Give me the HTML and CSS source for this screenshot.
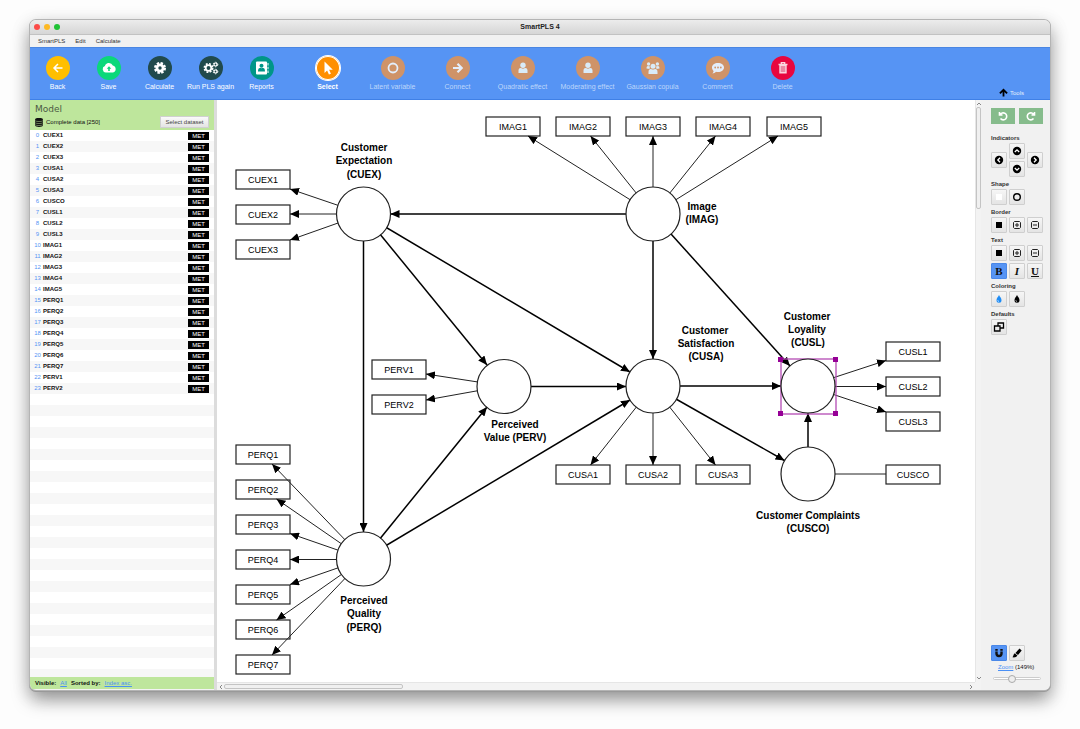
FILE: index.html
```html
<!DOCTYPE html>
<html lang="en">
<head>
<meta charset="utf-8">
<title>SmartPLS 4</title>
<link rel="stylesheet" href="styles.css">
</head>
<body>
<div class="window">
  <header class="titlebar">
    <div class="lights"><span class="light red"></span><span class="light yellow"></span><span class="light green"></span></div>
    <h1 class="title">SmartPLS 4</h1>
  </header>
  <nav class="menubar">
    <button class="menu">SmartPLS</button><button class="menu">Edit</button><button class="menu">Calculate</button>
  </nav>
  <div class="toolbar">
    <div class="actions">
      <button class="action"><span class="disc amber"><svg viewBox="0 0 24 24"><path d="M16.500 12H8.200M12 8l-4 4 4 4" fill="none" stroke="#fff" stroke-width="1.500"/></svg></span>Back</button>
      <button class="action"><span class="disc lime"><svg viewBox="0 0 24 24"><path d="M8.700 16.500a3.300 3.300 0 0 1-.8-6.400A4.200 4.200 0 0 1 15.800 9.500 3.600 3.600 0 0 1 16 16.500z" fill="#fff"/><path d="M12 10.200l-2.300 2.600h1.500V15h1.600v-2.200h1.500z" fill="#0bd87a"/></svg></span>Save</button>
      <button class="action"><span class="disc slate"><svg viewBox="0 0 24 24"><circle cx="12" cy="12" r="3.100" fill="none" stroke="#fff" stroke-width="2.800"/><circle cx="12" cy="12" r="4.900" fill="none" stroke="#fff" stroke-width="2.200" stroke-dasharray="2.400 1.448"/></svg></span>Calculate</button>
      <button class="action"><span class="disc slate"><svg viewBox="0 0 24 24"><circle cx="9.500" cy="12" r="2.800" fill="none" stroke="#fff" stroke-width="1.800"/><circle cx="9.500" cy="12" r="4.200" fill="none" stroke="#fff" stroke-width="1.600" stroke-dasharray="1.900 1.399"/><g fill="none" stroke="#fff"><circle cx="16.500" cy="8.500" r="1.500" stroke-width="1.200"/><circle cx="16.500" cy="8.500" r="2.300" stroke-width="1" stroke-dasharray="1.300 1.109"/><circle cx="16.500" cy="15.500" r="1.500" stroke-width="1.200"/><circle cx="16.500" cy="15.500" r="2.300" stroke-width="1" stroke-dasharray="1.300 1.109"/></g></svg></span>Run PLS again</button>
      <button class="action"><span class="disc teal"><svg viewBox="0 0 24 24"><rect x="6" y="5.500" width="11" height="13" rx="1" fill="#fff"/><path d="M17.500 7h1v2.500h-1zM17.500 10.800h1v2.500h-1zM17.500 14.600h1v2.500h-1z" fill="#fff"/><circle cx="11.500" cy="9.800" r="2" fill="#009688"/><path d="M8 15.500c0-4 1.500-4 3.500-3.200 2-.8 3.500-.8 3.500 3.200z" fill="#009688"/></svg></span>Reports</button>
    </div>
    <div class="modes">
      <button class="action current"><span class="disc orange"><svg viewBox="0 0 24 24"><path d="M8.500 5.500v11.500l2.600-2.400 1.800 4 2-.9-1.800-3.900h3.700z" fill="#fff"/></svg></span>Select</button>
      <button class="action dim"><span class="disc tan"><svg viewBox="0 0 24 24"><circle cx="12" cy="12" r="4.500" fill="none" stroke="#e3eefc" stroke-width="1.800"/></svg></span>Latent variable</button>
      <button class="action dim"><span class="disc tan"><svg viewBox="0 0 24 24"><path d="M7 12h8.500M11.500 7.800l4.200 4.200-4.200 4.200" fill="none" stroke="#e3eefc" stroke-width="2.200"/></svg></span>Connect</button>
      <button class="action dim"><span class="disc tan"><svg viewBox="0 0 24 24"><g id="person" fill="#d9ebf8"><circle cx="12" cy="9.300" r="2.700"/><path d="M7.500 17v-2.500c0-2.500 2-3 3-2.300 1 .6 2 .6 3 0 1-.7 3-.2 3 2.300V17z"/></g></svg></span>Quadratic effect</button>
      <button class="action dim"><span class="disc tan"><svg viewBox="0 0 24 24"><use href="#person"/></svg></span>Moderating effect</button>
      <button class="action dim"><span class="disc tan"><svg viewBox="0 0 24 24"><g fill="#d9ebf8"><circle cx="7.600" cy="8" r="1.700"/><circle cx="16.400" cy="8" r="1.700"/><path d="M5.500 12.500c0-3 1.500-3 3.500-2l-.5 2.500zM18.500 12.500c0-3-1.500-3-3.500-2l.5 2.500z"/><circle cx="12" cy="10.200" r="2.500"/><path d="M7.500 18v-2c0-3 2-3.300 3-2.800 1 .5 2 .5 3 0 1-.5 3-.2 3 2.800v2z"/></g></svg></span>Gaussian copula</button>
      <button class="action dim"><span class="disc tan"><svg viewBox="0 0 24 24"><path d="M12 7c3.500 0 6 2 6 4.500S15.500 16 12 16c-.8 0-1.500 0-2-.2-1 1-2.200 1.700-3.600 1.800.8-.8 1.200-1.600 1.200-2.600C6.500 14 6 12.800 6 11.500 6 9 8.500 7 12 7z" fill="#e3eefc"/><g fill="#cf9368"><circle cx="9.200" cy="11.500" r=".9"/><circle cx="12" cy="11.500" r=".9"/><circle cx="14.800" cy="11.500" r=".9"/></g></svg></span>Comment</button>
      <button class="action dim"><span class="disc crimson"><svg viewBox="0 0 24 24"><path d="M7.500 8.500h9M10.300 8V6.700h3.400V8" fill="none" stroke="#fbd5de" stroke-width="1.300"/><path d="M9 9.200h6v7.600H9z" fill="#e98aa3" stroke="#fbd5de" stroke-width="1.400"/></svg></span>Delete</button>
    </div>
    <button class="tools-toggle"><svg class="up" viewBox="0 0 10 10"><path d="M5 9.500V2M1 6l4-4 4 4" fill="none" stroke="#000" stroke-width="2"/></svg>Tools</button>
  </div>

  <div class="main">
    <aside class="sidebar">
      <div class="model">
        <h2 class="model-title">Model</h2>
        <div class="dataset">
          <svg class="db" viewBox="0 0 8 9"><path d="M0 1.500C0-.4 8-.4 8 1.500v6c0 1.900-8 1.900-8 0z" fill="#111"/><path d="M0 2.800c2 1 6 1 8 0M0 4.800c2 1 6 1 8 0M0 6.800c2 1 6 1 8 0" fill="none" stroke="#bee69c" stroke-width=".5"/></svg>
          <span>Complete data [250]</span>
          <button class="select-data">Select dataset</button>
        </div>
      </div>
      <div class="list">
        <table class="indicators">
          <tr><td class="idx">0</td><td class="name">CUEX1</td><td class="kind"><span class="met">MET</span></td></tr>
          <tr><td class="idx">1</td><td class="name">CUEX2</td><td class="kind"><span class="met">MET</span></td></tr>
          <tr><td class="idx">2</td><td class="name">CUEX3</td><td class="kind"><span class="met">MET</span></td></tr>
          <tr><td class="idx">3</td><td class="name">CUSA1</td><td class="kind"><span class="met">MET</span></td></tr>
          <tr><td class="idx">4</td><td class="name">CUSA2</td><td class="kind"><span class="met">MET</span></td></tr>
          <tr><td class="idx">5</td><td class="name">CUSA3</td><td class="kind"><span class="met">MET</span></td></tr>
          <tr><td class="idx">6</td><td class="name">CUSCO</td><td class="kind"><span class="met">MET</span></td></tr>
          <tr><td class="idx">7</td><td class="name">CUSL1</td><td class="kind"><span class="met">MET</span></td></tr>
          <tr><td class="idx">8</td><td class="name">CUSL2</td><td class="kind"><span class="met">MET</span></td></tr>
          <tr><td class="idx">9</td><td class="name">CUSL3</td><td class="kind"><span class="met">MET</span></td></tr>
          <tr><td class="idx">10</td><td class="name">IMAG1</td><td class="kind"><span class="met">MET</span></td></tr>
          <tr><td class="idx">11</td><td class="name">IMAG2</td><td class="kind"><span class="met">MET</span></td></tr>
          <tr><td class="idx">12</td><td class="name">IMAG3</td><td class="kind"><span class="met">MET</span></td></tr>
          <tr><td class="idx">13</td><td class="name">IMAG4</td><td class="kind"><span class="met">MET</span></td></tr>
          <tr><td class="idx">14</td><td class="name">IMAG5</td><td class="kind"><span class="met">MET</span></td></tr>
          <tr><td class="idx">15</td><td class="name">PERQ1</td><td class="kind"><span class="met">MET</span></td></tr>
          <tr><td class="idx">16</td><td class="name">PERQ2</td><td class="kind"><span class="met">MET</span></td></tr>
          <tr><td class="idx">17</td><td class="name">PERQ3</td><td class="kind"><span class="met">MET</span></td></tr>
          <tr><td class="idx">18</td><td class="name">PERQ4</td><td class="kind"><span class="met">MET</span></td></tr>
          <tr><td class="idx">19</td><td class="name">PERQ5</td><td class="kind"><span class="met">MET</span></td></tr>
          <tr><td class="idx">20</td><td class="name">PERQ6</td><td class="kind"><span class="met">MET</span></td></tr>
          <tr><td class="idx">21</td><td class="name">PERQ7</td><td class="kind"><span class="met">MET</span></td></tr>
          <tr><td class="idx">22</td><td class="name">PERV1</td><td class="kind"><span class="met">MET</span></td></tr>
          <tr><td class="idx">23</td><td class="name">PERV2</td><td class="kind"><span class="met">MET</span></td></tr>
        </table>
      </div>
      <div class="filter"><b>Visible:</b><a href="#all">All</a><b>Sorted by:</b><a href="#sort">Index asc.</a></div>
    </aside>

    <main class="canvas">
      <div class="drawing">
        <svg class="diagram" width="758" height="582" viewBox="217 100 758 582" role="img" aria-label="Path model">
          <defs>
            <marker id="head" viewBox="0 0 9 8" refX="9" refY="4" markerWidth="9" markerHeight="8" markerUnits="userSpaceOnUse" orient="auto"><path d="M0 0l9 4-9 4z"/></marker>
          </defs>
          <g class="boxes">
            <rect x="236" y="170" width="54" height="19"/><rect x="236" y="205" width="54" height="19"/><rect x="236" y="240" width="54" height="19"/>
            <rect x="486" y="117" width="54" height="19"/><rect x="556" y="117" width="54" height="19"/><rect x="626" y="117" width="54" height="19"/><rect x="696" y="117" width="54" height="19"/><rect x="767" y="117" width="54" height="19"/>
            <rect x="372" y="360" width="54" height="19"/><rect x="372" y="395" width="54" height="19"/>
            <rect x="886" y="342" width="54" height="19"/><rect x="886" y="377" width="54" height="19"/><rect x="886" y="412" width="54" height="19"/><rect x="886" y="465" width="54" height="19"/>
            <rect x="556" y="465" width="54" height="19"/><rect x="626" y="465" width="54" height="19"/><rect x="696" y="465" width="54" height="19"/>
            <rect x="236" y="445" width="54" height="19"/><rect x="236" y="480" width="54" height="19"/><rect x="236" y="515" width="54" height="19"/><rect x="236" y="550" width="54" height="19"/><rect x="236" y="585" width="54" height="19"/><rect x="236" y="620" width="54" height="19"/><rect x="236" y="655" width="54" height="19"/>
          </g>
          <g class="thin" marker-end="url(#head)">
            <path d="M363.500 214L290 189"/><path d="M363.500 214H290"/><path d="M363.500 214L290 240"/>
            <path d="M653 214L528 136"/><path d="M653 214L590.500 136"/><path d="M653 214V136"/><path d="M653 214L715.500 136"/><path d="M653 214L778 136"/>
            <path d="M504 386L426 374"/><path d="M504 386L426 400"/>
            <path d="M808 386L886 360.500"/><path d="M808 386.500H886"/><path d="M808 386L886 412"/>
            <path d="M653 386L590.500 465"/><path d="M653 386V465"/><path d="M653 386L715.500 465"/>
            <path d="M363.500 559L272 464"/><path d="M363.500 559L276.500 499"/><path d="M363.500 559L290 533.500"/><path d="M363.500 559.500H290"/><path d="M363.500 559L290 584.500"/><path d="M363.500 559L276.500 620"/><path d="M363.500 559L272 655"/>
          </g>
          <path class="plain" d="M808 474H886"/>
          <g class="thick" marker-end="url(#head)">
            <path d="M653 214H390.500"/><path d="M653 214V359"/><path d="M653 214L790 366"/>
            <path d="M363.500 214L487 365"/><path d="M363.500 214L630 372"/><path d="M363.500 214V532"/>
            <path d="M363.500 559L487 407"/><path d="M363.500 559L630 400"/>
            <path d="M504 386.500H626"/><path d="M653 386H781"/><path d="M653 386L784.500 460.500"/><path d="M808 474V413"/>
          </g>
          <rect class="selection" x="781" y="359" width="55" height="55"/>
          <g class="nodes">
            <circle cx="363.500" cy="214" r="27"/><circle cx="653" cy="214" r="27"/><circle cx="504" cy="386.500" r="27"/><circle cx="653" cy="386" r="27"/><circle cx="808" cy="386" r="27"/><circle cx="808" cy="474" r="27"/><circle cx="363.500" cy="559" r="27"/>
          </g>
          <g class="handles"><rect x="778" y="357" width="5" height="5"/><rect x="833" y="357" width="5" height="5"/><rect x="778" y="411" width="5" height="5"/><rect x="833" y="411" width="5" height="5"/></g>
          <g class="box-text">
            <text x="263" y="183">CUEX1</text><text x="263" y="218">CUEX2</text><text x="263" y="253">CUEX3</text>
            <text x="513" y="130">IMAG1</text><text x="583" y="130">IMAG2</text><text x="653" y="130">IMAG3</text><text x="723" y="130">IMAG4</text><text x="794" y="130">IMAG5</text>
            <text x="399" y="373">PERV1</text><text x="399" y="408">PERV2</text>
            <text x="913" y="355">CUSL1</text><text x="913" y="390">CUSL2</text><text x="913" y="425">CUSL3</text><text x="913" y="478">CUSCO</text>
            <text x="583" y="478">CUSA1</text><text x="653" y="478">CUSA2</text><text x="723" y="478">CUSA3</text>
            <text x="263" y="458">PERQ1</text><text x="263" y="493">PERQ2</text><text x="263" y="528">PERQ3</text><text x="263" y="563">PERQ4</text><text x="263" y="598">PERQ5</text><text x="263" y="633">PERQ6</text><text x="263" y="668">PERQ7</text>
          </g>
          <g class="node-text">
            <text x="364" y="151">Customer</text><text x="364" y="164">Expectation</text><text x="364" y="178">(CUEX)</text>
            <text x="702" y="210">Image</text><text x="702" y="223">(IMAG)</text>
            <text x="705" y="334">Customer</text><text x="706" y="347">Satisfaction</text><text x="706" y="360">(CUSA)</text>
            <text x="807" y="320">Customer</text><text x="807" y="333">Loyality</text><text x="808" y="346">(CUSL)</text>
            <text x="515" y="428">Perceived</text><text x="515" y="441">Value (PERV)</text>
            <text x="808" y="519">Customer Complaints</text><text x="808" y="532">(CUSCO)</text>
            <text x="364" y="604">Perceived</text><text x="364" y="617">Quality</text><text x="364" y="631">(PERQ)</text>
          </g>
        </svg>
      </div>
      <div class="vscroll"><svg class="chev" viewBox="0 0 6 6"><path d="M1 4l2-2 2 2"/></svg><div class="vtrack"><div class="vthumb"></div></div><svg class="chev" viewBox="0 0 6 6"><path d="M1 2l2 2 2-2"/></svg></div>
      <div class="hscroll"><svg class="chev" viewBox="0 0 6 6"><path d="M4 1L2 3l2 2"/></svg><div class="htrack"><div class="hthumb"></div></div><svg class="chev" viewBox="0 0 6 6"><path d="M2 1l2 2-2 2"/></svg></div>
    </main>

    <aside class="panel">
      <div class="history">
        <button class="hist" aria-label="Undo"><svg viewBox="0 0 12 12"><path d="M2.500 2v3h3M3 5a3.500 3.500 0 1 1 .5 3.600" fill="none" stroke="#fff" stroke-width="1.600"/></svg></button>
        <button class="hist" aria-label="Redo"><svg viewBox="0 0 12 12"><path d="M9.500 2v3h-3M9 5a3.500 3.500 0 1 0-.5 3.600" fill="none" stroke="#fff" stroke-width="1.600"/></svg></button>
      </div>
      <section class="group"><h3 class="label">Indicators</h3>
        <div class="pad">
          <button class="tool left" aria-label="Left"><svg viewBox="0 0 12 12"><circle cx="6" cy="6" r="4.200"/><path d="M7 3.800L4.800 6 7 8.200" fill="none" stroke="#fff" stroke-width="1.300"/></svg></button>
          <button class="tool upper" aria-label="Top"><svg viewBox="0 0 12 12"><circle cx="6" cy="6" r="4.200"/><path d="M3.800 7L6 4.800 8.200 7" fill="none" stroke="#fff" stroke-width="1.300"/></svg></button>
          <button class="tool lower" aria-label="Bottom"><svg viewBox="0 0 12 12"><circle cx="6" cy="6" r="4.200"/><path d="M3.800 5L6 7.200 8.200 5" fill="none" stroke="#fff" stroke-width="1.300"/></svg></button>
          <button class="tool right" aria-label="Right"><svg viewBox="0 0 12 12"><circle cx="6" cy="6" r="4.200"/><path d="M5 3.800L7.200 6 5 8.200" fill="none" stroke="#fff" stroke-width="1.300"/></svg></button>
        </div>
      </section>
      <section class="group"><h3 class="label">Shape</h3>
        <div class="row">
          <button class="tool" aria-label="Fill colour"><svg viewBox="0 0 12 12"><path d="M3 3h6v6H3z" fill="#fff"/></svg></button>
          <button class="tool" aria-label="Circle"><svg viewBox="0 0 12 12"><circle cx="6" cy="6" r="3.300" fill="none" stroke="#000" stroke-width="1.400"/></svg></button>
        </div>
      </section>
      <section class="group"><h3 class="label">Border</h3>
        <div class="row">
          <button class="tool" aria-label="Border colour"><svg viewBox="0 0 12 12"><path d="M3 3h6v6H3z"/></svg></button>
          <button class="tool" aria-label="Thicker"><svg viewBox="0 0 12 12"><path d="M3.500 2.500h5l1 1v5l-1 1h-5l-1-1v-5zM4 6h4M6 4v4" fill="none" stroke="#222"/></svg></button>
          <button class="tool" aria-label="Thinner"><svg viewBox="0 0 12 12"><path d="M3.500 2.500h5l1 1v5l-1 1h-5l-1-1v-5zM4 6h4" fill="none" stroke="#222"/></svg></button>
        </div>
      </section>
      <section class="group"><h3 class="label">Text</h3>
        <div class="row">
          <button class="tool" aria-label="Text colour"><svg viewBox="0 0 12 12"><path d="M3 3h6v6H3z"/></svg></button>
          <button class="tool" aria-label="Larger"><svg viewBox="0 0 12 12"><path d="M3.500 2.500h5l1 1v5l-1 1h-5l-1-1v-5zM4 6h4M6 4v4" fill="none" stroke="#222"/></svg></button>
          <button class="tool" aria-label="Smaller"><svg viewBox="0 0 12 12"><path d="M3.500 2.500h5l1 1v5l-1 1h-5l-1-1v-5zM4 6h4" fill="none" stroke="#222"/></svg></button>
          <button class="tool on type">B</button>
          <button class="tool type italic">I</button>
          <button class="tool type under">U</button>
        </div>
      </section>
      <section class="group"><h3 class="label">Coloring</h3>
        <div class="row">
          <button class="tool" aria-label="Colour"><svg viewBox="0 0 12 12"><path d="M6 2C7 4.200 8.500 5 8.500 7.200a2.500 2.500 0 0 1-5 0C3.500 5 5 4.200 6 2z" fill="#1e8cf5"/><path d="M4.800 7.300a1.200 1.200 0 0 0 1 1.200" fill="none" stroke="#fff" stroke-width=".7"/></svg></button>
          <button class="tool" aria-label="Black and white"><svg viewBox="0 0 12 12"><path d="M6 2C7 4.200 8.500 5 8.500 7.200a2.500 2.500 0 0 1-5 0C3.500 5 5 4.200 6 2z"/><path d="M4.800 7.300a1.200 1.200 0 0 0 1 1.200" fill="none" stroke="#fff" stroke-width=".7"/></svg></button>
        </div>
      </section>
      <section class="group"><h3 class="label">Defaults</h3>
        <div class="row">
          <button class="tool" aria-label="Restore defaults"><svg viewBox="0 0 12 12"><path d="M5 5V2h5.500v5H7.500M1.500 5H7v5H1.500z" fill="none" stroke="#000" stroke-width="1.300"/></svg></button>
        </div>
      </section>
      <div class="bottom">
        <div class="row">
          <button class="tool on" aria-label="Snap"><svg viewBox="0 0 12 12"><path d="M3.500 2v4.500a2.500 2.500 0 0 0 5 0V2" fill="none" stroke="#111" stroke-width="2.400"/><path d="M2 4.200h3M7 4.200h3" stroke="#5694f4" stroke-width=".7"/></svg></button>
          <button class="tool" aria-label="Brush"><svg viewBox="0 0 12 12"><path d="M8.500 1.500l2.200 1.900-3.700 4.700-2.600-2.100zM3.700 6.300l2.700 2.200c-.8 1.700-2.700 2.200-5 1.800 1-.6.800-3 2.300-4z"/></svg></button>
        </div>
        <div class="zoom"><a href="#zoom">Zoom</a> (149%)</div>
        <input class="slider" type="range" min="0" max="400" value="149" aria-label="Zoom">
      </div>
    </aside>
  </div>
</div>
</body>
</html>
```
FILE: styles.css
```css
* { box-sizing: border-box; }
body {
  margin: 0;
  min-height: 100vh;
  padding: 20px 30px 39px;
  display: flex;
  background: #fdfdfd;
  color: #111;
  font-family: "Liberation Sans", Arial, sans-serif;
  font-size: 6px;
}
button { font: inherit; color: inherit; border: 0; padding: 0; margin: 0; background: none; }
h1, h2, h3 { margin: 0; font-weight: normal; }
svg { display: block; }
a { color: #4a90f5; }

.window {
  flex: 1;
  min-width: 0;
  display: flex;
  flex-direction: column;
  border-radius: 6px;
  overflow: hidden;
  background: #f3f3f3;
  box-shadow: 0 0 0 1px #b4b4b4, 0 1px 0 1px #999, 0 10px 18px rgba(0,0,0,.36), 0 4px 20px rgba(0,0,0,.14);
}
.titlebar {
  display: grid;
  grid-template-columns: 1fr auto 1fr;
  align-items: center;
  height: 15px;
  background: linear-gradient(#ececec, #d6d6d6);
  border-bottom: 1px solid #c2c2c2;
}
.lights { display: flex; gap: 4px; padding-left: 4px; }
.light { width: 6px; height: 6px; border-radius: 50%; }
.red { background: #fc4b48; }
.yellow { background: #fdb924; }
.green { background: #1fc235; }
.title { font-size: 7px; font-weight: bold; line-height: 14px; color: #222; }
.menubar {
  display: flex;
  gap: 10px;
  height: 12px;
  padding-left: 8px;
  background: #f1f1f1;
  color: #333;
}

.toolbar {
  display: flex;
  height: 53px;
  padding-left: 2px;
  background: #5694f4;
  border-top: 1px solid #4a86e2;
  border-bottom: 1px solid #3f80e6;
  color: #fff;
  font-size: 7px;
}
.actions, .modes { display: flex; }
.actions { margin-right: 8px; }
.action {
  display: flex;
  flex-direction: column;
  align-items: center;
  width: 51px;
  padding-top: 8px;
  gap: 2px;
  line-height: 10px;
  white-space: nowrap;
}
.modes .action { width: 65px; }
.disc { display: block; width: 24px; height: 24px; border-radius: 50%; }
.disc svg { width: 24px; height: 24px; }
.amber { background: #ffbf00; }
.lime { background: #0bd87a; }
.slate { background: #214a4c; }
.teal { background: #009688; }
.orange { background: #ff8f00; box-shadow: inset 0 0 0 1px #fff, 0 0 0 1px #fff; }
.tan { background: #cf9368; }
.crimson { background: #e8063e; }
.current { font-weight: bold; }
.dim { color: #bdd6fb; }
.tools-toggle {
  display: flex;
  align-items: center;
  gap: 2px;
  margin-left: auto;
  align-self: flex-end;
  padding-right: 26px;
  height: 13px;
  font-size: 6px;
  color: #e4eefd;
}
.up { width: 9px; height: 9px; }

.main { flex: 1; min-height: 0; display: flex; }
.sidebar { width: 187px; display: flex; flex-direction: column; border-right: 3px solid #dcdcdc; }
.model { background: #bee69c; padding: 4px 5px 1px; }
.model-title { font: 9px/11px "DejaVu Sans", sans-serif; color: #4c5a44; }
.dataset { display: flex; align-items: center; gap: 3px; height: 14px; }
.db { width: 8px; height: 9px; }
.select-data {
  margin-left: auto;
  width: 49px;
  height: 12px;
  border: 1px solid #d0d0d0;
  background: linear-gradient(#fafafa, #e4e4e4);
  color: #444;
}
.list {
  flex: 1;
  min-height: 0;
  padding: 0 2px;
  background: repeating-linear-gradient(#fff 0 11px, #f7f7f7 11px 22px);
}
.indicators { width: 100%; border-collapse: collapse; line-height: 11px; }
.indicators td { padding: 0; height: 11px; }
.indicators .idx { width: 11px; text-align: center; color: #5694f4; }
.name { font-weight: bold; }
.kind { width: 24px; }
.met { display: block; width: 21px; height: 8px; line-height: 8px; text-align: center; background: #000; color: #fff; }
.filter { display: flex; align-items: center; gap: 4px; height: 12px; margin-bottom: 1px; padding-left: 5px; background: #bee69c; }

.canvas {
  flex: 1;
  min-width: 0;
  display: grid;
  grid-template-columns: minmax(0, 1fr) 6px;
  grid-template-rows: minmax(0, 1fr) 8px;
}
.drawing { background: #fff; overflow: hidden; }
.boxes rect { fill: #fff; stroke: #222; stroke-width: 1.2; }
.thin { fill: none; stroke: #222; stroke-width: 1; }
.plain { stroke: #222; stroke-width: 1; }
.thick { fill: none; stroke: #000; stroke-width: 1.5; }
.nodes circle { fill: #fff; stroke: #222; stroke-width: 1.2; }
.selection { fill: none; stroke: #b44bb4; stroke-width: 1.3; }
.handles rect { fill: #960096; }
.box-text, .node-text { fill: #000; text-anchor: middle; }
.box-text { font-size: 9px; }
.node-text { font-size: 10px; font-weight: bold; }
.vscroll, .hscroll { display: flex; background: #f3f3f3; }
.vscroll { flex-direction: column; padding: 1px 0; border-left: 1px solid #e6e6e6; }
.hscroll { align-items: center; padding: 0 1px; border-top: 1px solid #e6e6e6; }
.chev { width: 6px; height: 6px; fill: none; stroke: #888; stroke-width: 1; flex: none; }
.vtrack, .htrack { flex: 1; }
.vthumb { width: 5px; height: 18%; border: 1px solid #c4c4c4; border-radius: 2px; background: #f0f0f0; }
.hthumb { width: 24%; height: 5px; border: 1px solid #c4c4c4; border-radius: 2px; background: #f0f0f0; }

.panel { width: 69px; padding: 8px 7px 8px 10px; display: flex; flex-direction: column; gap: 2px; background: #f1f1f1; }
.history { display: flex; gap: 4px; margin-bottom: 7px; }
.hist { flex: 1; height: 16px; display: grid; place-items: center; background: #86bc8c; }
.hist svg { width: 12px; height: 12px; }
.label { font-size: 6px; font-weight: bold; line-height: 10px; color: #333; }
.row, .pad { display: grid; grid-template-columns: repeat(3, 16px); gap: 2px; }
.pad { align-items: center; }
.left { grid-area: 1 / 1 / 3 / 2; }
.upper { grid-area: 1 / 2; }
.lower { grid-area: 2 / 2; }
.right { grid-area: 1 / 3 / 3 / 4; }
.tool {
  display: grid;
  place-items: center;
  width: 16px;
  height: 16px;
  border: 1px solid #cfcfcf;
  border-radius: 1px;
  background: linear-gradient(#f6f6f6, #e4e4e4);
}
.tool svg { width: 12px; height: 12px; }
.on { background: #5694f4; border-color: #4a88e8; }
.type { font: bold 11px/14px "Liberation Serif", serif; }
.italic { font-style: italic; }
.under { text-decoration: underline; }
.bottom { margin-top: auto; }
.zoom { padding-left: 7px; line-height: 13px; }
.slider { display: block; appearance: none; width: 48px; height: 8px; margin: 0 2px; background: none; }
.slider::-webkit-slider-runnable-track { height: 3px; border: 1px solid #ccc; border-radius: 2px; background: #fff; }
.slider::-webkit-slider-thumb { appearance: none; width: 8px; height: 8px; margin-top: -3px; border: 1px solid #aaa; border-radius: 50%; background: #eee; }
```
